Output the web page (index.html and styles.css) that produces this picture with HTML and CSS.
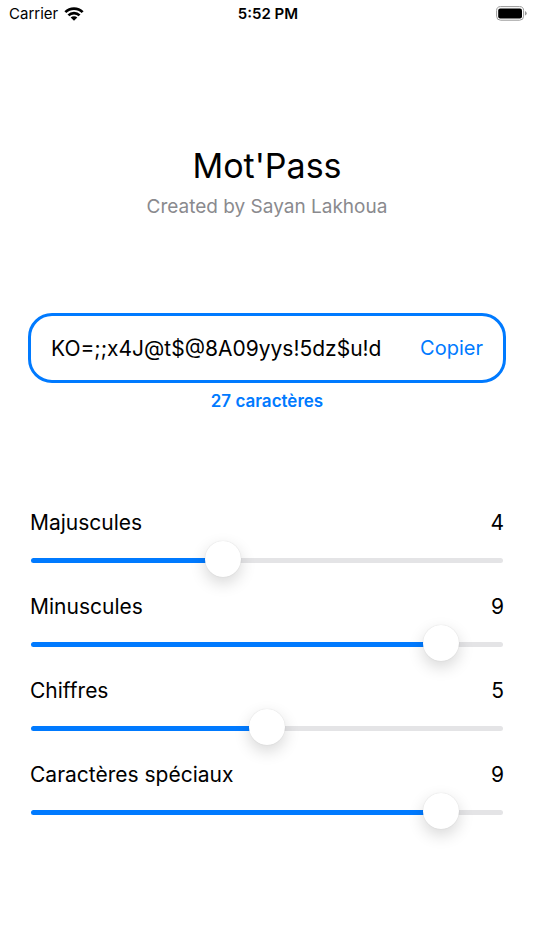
FILE: index.html
```html
<!DOCTYPE html>
<html lang="fr">
<head>
<meta charset="utf-8">
<meta name="viewport" content="width=device-width, initial-scale=1">
<title>Mot'Pass</title>
<link rel="stylesheet" href="styles.css">
</head>
<body>
<div class="status">
  <div class="carrier"><span>Carrier</span>
    <svg class="wifi" viewBox="0 0 20 14" aria-hidden="true"><path d="M0.4 4.2a13.6 13.6 0 0 1 19.2 0l-1.9 1.9a10.9 10.9 0 0 0-15.4 0z"/><path d="M3.5 7.4a9.2 9.2 0 0 1 13 0l-1.9 1.9a6.5 6.5 0 0 0-9.2 0z"/><path d="M6.7 10.5a4.7 4.7 0 0 1 6.6 0L10 13.8z"/></svg>
  </div>
  <time class="clock">5:52 PM</time>
  <svg class="battery" viewBox="0 0 31 15" aria-hidden="true"><rect class="battery-case" x="0.6" y="0.6" width="27" height="13.6" rx="4"/><rect x="2.2" y="2.4" width="23.8" height="10" rx="2"/><path class="battery-tip" d="M29 5q1.7.7 1.7 2.3T29 9.6z"/></svg>
</div>
<main>
  <header class="intro">
    <h1>Mot'Pass</h1>
    <p>Created by Sayan Lakhoua</p>
  </header>
  <section class="result">
    <div class="password">
      <output>KO=;;x4J@t$@8A09yys!5dz$u!d</output>
      <button type="button">Copier</button>
    </div>
    <p class="count">27 caractères</p>
  </section>
  <form class="options">
    <div class="option at-4"><label for="upper">Majuscules</label><output for="upper">4</output><input id="upper" type="range" min="0" max="10" value="4"></div>
    <div class="option at-9"><label for="lower">Minuscules</label><output for="lower">9</output><input id="lower" type="range" min="0" max="10" value="9"></div>
    <div class="option at-5"><label for="digits">Chiffres</label><output for="digits">5</output><input id="digits" type="range" min="0" max="10" value="5"></div>
    <div class="option at-9"><label for="special">Caractères spéciaux</label><output for="special">9</output><input id="special" type="range" min="0" max="10" value="9"></div>
  </form>
</main>
</body>
</html>
```
FILE: styles.css
```css
* { box-sizing: border-box; }
body { margin: 0; min-height: 100vh; background: #fff; color: #000; font-family: Inter, sans-serif; }
main { padding-bottom: 40px; }
h1, p { margin: 0; font-weight: 400; }
.status { display: grid; grid-template-columns: 1fr auto 1fr; align-items: center; height: 27px; padding: 0 7px 0 9px; font-size: 15px; }
.carrier { display: flex; align-items: center; gap: 6px; }
.wifi { width: 20px; height: 14px; }
.clock { font-weight: 600; }
.battery { width: 31px; height: 15px; justify-self: end; }
.battery-case { fill: none; stroke: #999; }
.battery-tip { fill: #999; }
.intro { padding-top: 117px; text-align: center; }
h1 { font-size: 34px; line-height: 44px; }
.intro p { margin-top: 7px; font-size: 19px; line-height: 24px; color: #8a8a8e; }
.result { margin: 94px 28px 0; }
.password { display: flex; align-items: center; justify-content: space-between; height: 70px; padding: 0 20px; border: 3px solid #007aff; border-radius: 24px; font-size: 21px; }
.password button { border: 0; padding: 0; background: none; color: #007aff; font: inherit; font-size: 20px; }
.count { margin-top: 8px; text-align: center; color: #007aff; font-size: 17px; line-height: 20px; font-weight: 600; }
.options { display: grid; gap: 15px; margin: 98px 30px 0; }
.option { display: grid; grid-template-columns: 1fr auto; row-gap: 5px; font-size: 21px; line-height: 28px; }
input { grid-column: 1 / -1; appearance: none; width: auto; height: 36px; margin: 0 1px; background: none; }
input::-webkit-slider-runnable-track { height: 5px; border-radius: 3px; background: linear-gradient(to right, #007aff var(--fill), #e4e4e6 var(--fill)); }
input::-webkit-slider-thumb { appearance: none; width: 36px; height: 36px; margin-top: -17px; border-radius: 50%; background: #fff; box-shadow: 0 0 1px rgb(0 0 0 / 16%), 0 6px 16px rgb(0 0 0 / 16%); }
.at-4 { --fill: 40%; }
.at-5 { --fill: 50%; }
.at-9 { --fill: 88%; }
```
